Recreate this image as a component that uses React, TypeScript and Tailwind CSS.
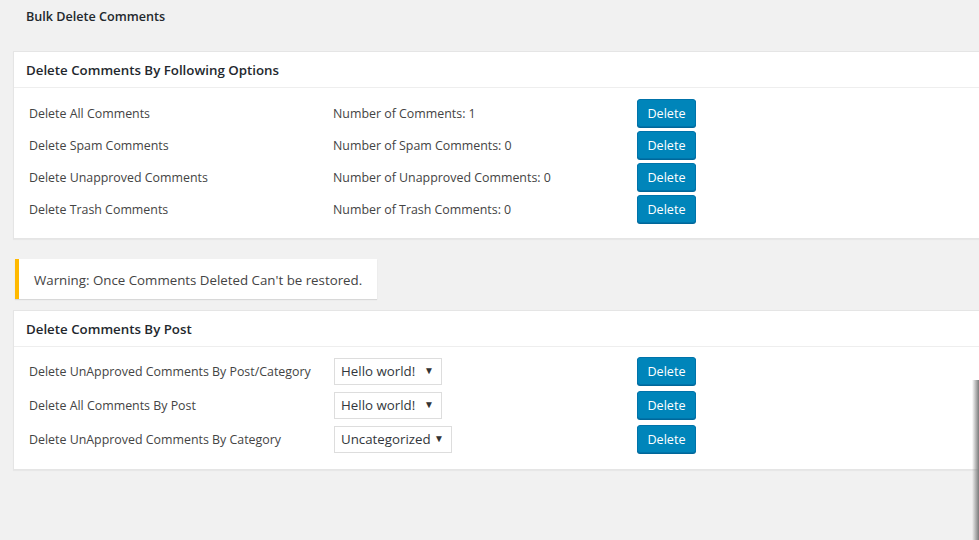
const font = { fontFamily: '"Open Sans", "Noto Sans", sans-serif' };

function DeleteButton() {
  return (
    <button
      type="button"
      className="h-[28px] w-[59px] rounded-[3px] border border-[#0073aa] bg-[#0085ba] pt-[2px] text-[12.6px] text-white shadow-[0_1px_0_#006799]"
    >
      Delete
    </button>
  );
}

function Select({ value, width }: { value: string; width: string }) {
  return (
    <div className={`flex h-[27px] items-center justify-between border border-[#ddd] bg-white pl-[6px] pr-[7px] pt-[2px] text-[13.3px] text-[#32373c] ${width}`}>
      <span>{value}</span>
      <span className="pb-[4px] text-[10px] text-[#333]">▼</span>
    </div>
  );
}

function Card({ title, children }: { title: string; children: React.ReactNode }) {
  return (
    <div className="ml-[13px] border border-r-0 border-[#e5e5e5] bg-white shadow-[0_1px_1px_rgba(0,0,0,0.04)]">
      <div className="flex h-[36px] items-center border-b border-[#eee] pl-[12px] pt-[2px] text-[13.3px] font-semibold text-[#23282d]">
        {title}
      </div>
      {children}
    </div>
  );
}

const counts = [
  ["Delete All Comments", "Number of Comments: 1"],
  ["Delete Spam Comments", "Number of Spam Comments: 0"],
  ["Delete Unapproved Comments", "Number of Unapproved Comments: 0"],
  ["Delete Trash Comments", "Number of Trash Comments: 0"],
];

const byPost = [
  ["Delete UnApproved Comments By Post/Category", "Hello world!", "w-[108px]"],
  ["Delete All Comments By Post", "Hello world!", "w-[108px]"],
  ["Delete UnApproved Comments By Category", "Uncategorized", "w-[118px]"],
];

export default function App() {
  return (
    <div style={font} className="relative h-[540px] w-[979px] overflow-hidden bg-[#f1f1f1] text-[12.4px] text-[#444]">
      <h1 className="pl-[26px] pt-[8px] text-[12.6px] font-semibold leading-[18px] text-[#23282d]">Bulk Delete Comments</h1>

      <div className="mt-[25px]">
        <Card title="Delete Comments By Following Options">
          <div className="flex flex-col gap-[4px] pb-[15px] pl-[15px] pt-[11px]">
            {counts.map(([label, count]) => (
              <div key={label} className="flex h-[28px] items-center pt-[2px]">
                <div className="w-[304px]">{label}</div>
                <div className="w-[304px]">{count}</div>
                <div className="-mt-[2px]">
                  <DeleteButton />
                </div>
              </div>
            ))}
          </div>
        </Card>
      </div>

      <div className="ml-[15px] mt-[20px] flex h-[40px] w-[362px] items-center border-l-4 border-[#ffb900] bg-white pl-[15px] pt-[3px] text-[13.3px] text-[#444] shadow-[0_1px_1px_rgba(0,0,0,0.1)]">
        Warning: Once Comments Deleted Can't be restored.
      </div>

      <div className="mt-[11px]">
        <Card title="Delete Comments By Post">
          <div className="flex flex-col gap-[6px] pb-[16px] pl-[15px] pt-[10px]">
            {byPost.map(([label, value, w]) => (
              <div key={label} className="flex h-[28px] items-center">
                <div className="w-[305px] pt-[3px]">{label}</div>
                <div className="w-[303px]">
                  <Select value={value} width={w} />
                </div>
                <DeleteButton />
              </div>
            ))}
          </div>
        </Card>
      </div>

      <div className="absolute bottom-0 right-0 top-[380px] w-[7px] bg-gradient-to-r from-transparent to-[#7a7a7a]" />
    </div>
  );
}
